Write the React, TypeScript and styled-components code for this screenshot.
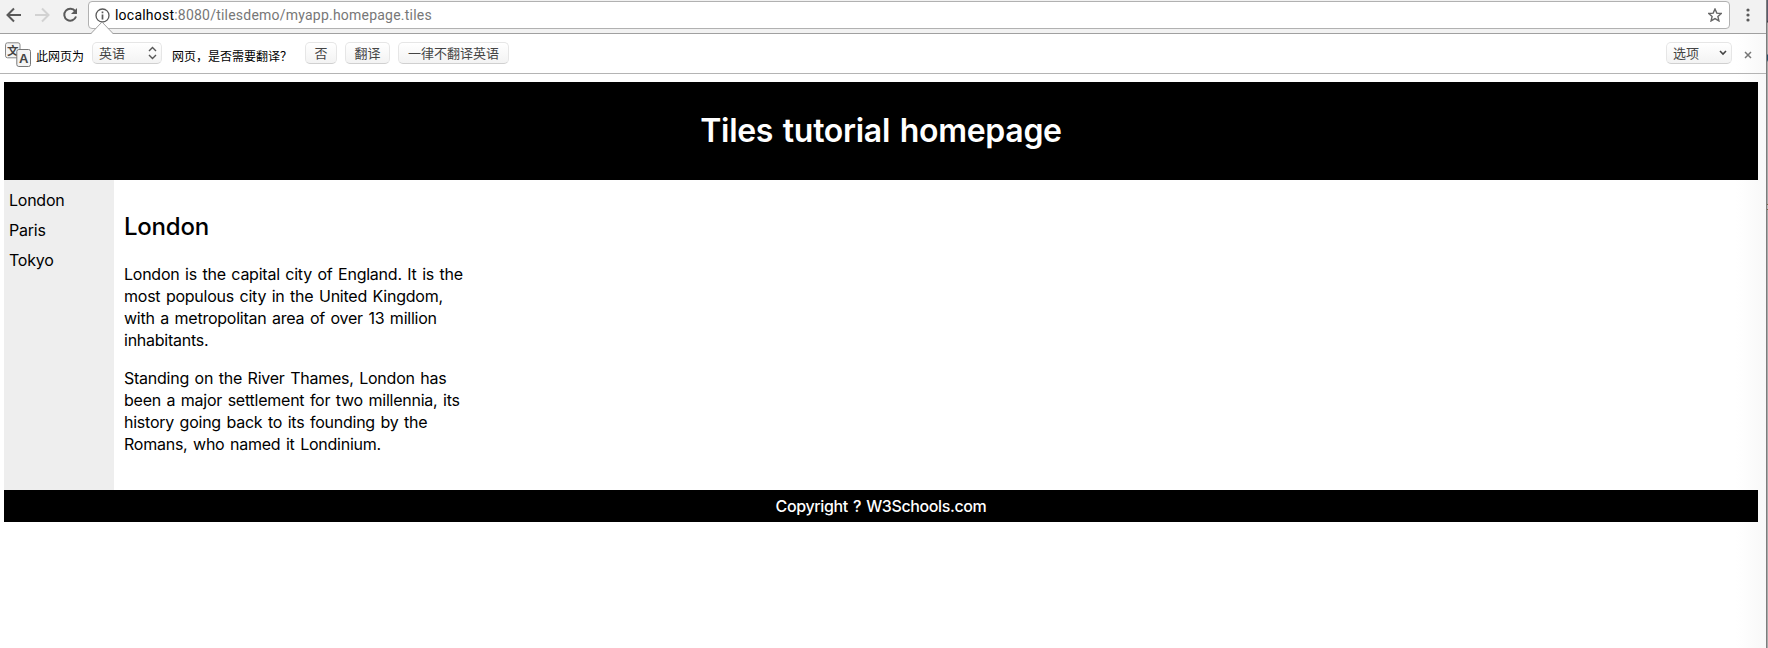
import React from 'react';
import styled, { createGlobalStyle } from 'styled-components';

const Global = createGlobalStyle`
  * { box-sizing: border-box; }
  body { margin: 0; background: #fff; overflow: hidden; font-family: 'Liberation Sans', 'Noto Sans CJK SC', sans-serif; }
`;
const Screen = styled.div`
  display: grid;
  grid-template-columns: 1766px 2px;
  grid-template-rows: 648px;
  width: 1768px;
`;
const Browser = styled.div`
  display: flex;
  flex-direction: column;
  min-width: 0;
  background: linear-gradient(to right, #fff calc(100% - 30px), #f8f8f8);
`;
const Edge = styled.div`
  border-left: 1px solid #7d7d7d;
  background: linear-gradient(#5a5a6c 0 20px, #353540 22px, #aaa 23px 54px, #27506a 55px 60px, #aaa 62px 204px, #7a6a4a 204px 205px, #bbb 205px 209px, #7a6a4a 209px 210px, #aaa 210px);
`;
const Toolbar = styled.div`
  display: flex;
  align-items: flex-start;
  height: 34px;
  padding: 1px 10px 0 6px;
  background: #f2f2f2;
  border-bottom: 1px solid #a0a0a0;
`;
const ToolIcon = styled.svg<{ $gap?: number }>`
  width: 16px;
  height: 16px;
  margin: 6px ${p => p.$gap ?? 12}px 0 0;
  flex: none;
  overflow: visible;
`;
const Omnibox = styled.div`
  display: flex;
  align-items: center;
  width: 1642px;
  height: 28px;
  padding: 0 7px 0 6px;
  background: #fff;
  border: 1px solid #b1b1b1;
  border-radius: 4px;
`;
const Url = styled.span`
  flex: 1;
  margin-left: 5px;
  font: 14px/26px Roboto, sans-serif;
  letter-spacing: 0.22px;
  color: #777;
  b { font-weight: 400; color: #000; }
`;
const Menu = styled.svg`
  width: 4px;
  height: 14px;
  margin: 7px 0 0 16px;
`;
const InfoBar = styled.div`
  position: relative;
  display: flex;
  align-items: flex-start;
  height: 40px;
  padding: 8px 14px 0 4px;
  border-bottom: 1px solid #b4b4b4;
`;
const Notch = styled.svg`
  position: absolute;
  left: 91px;
  top: -13px;
  width: 22px;
  height: 14px;
`;
const TranslateIcon = styled.svg`
  width: 28px;
  height: 28px;
  margin-right: 4px;
`;
const Label = styled.span<{ $w: number }>`
  width: ${p => p.$w}px;
  flex: none;
  font: 12px/18px 'Noto Sans CJK SC', sans-serif;
  color: #000;
  margin-top: 5px;
  white-space: nowrap;
`;
const Button = styled.span<{ $w: number; $gap?: number }>`
  display: flex;
  align-items: center;
  justify-content: space-between;
  flex: none;
  width: ${p => p.$w}px;
  height: 22px;
  padding: 0 4px 0 6px;
  margin-right: ${p => p.$gap ?? 8}px;
  border: 1px solid #e6e6e6;
  border-bottom-color: #d0d0d0;
  border-radius: 5px;
  background: linear-gradient(#fff, #f3f3f3);
  font: 13px/20px 'Noto Sans CJK SC', sans-serif;
  color: #444;
  white-space: nowrap;
`;
const PushButton = styled(Button)`
  justify-content: center;
  padding: 0;
`;
const Spacer = styled.div`flex: 1;`;
const Close = styled.svg`
  width: 8px;
  height: 8px;
  margin-top: 9px;
`;
const Page = styled.main`
  padding: 8px 8px 0 4px;
  color: #000;
  font-family: Inter, 'Liberation Sans', sans-serif;
  letter-spacing: -0.24px;
  word-spacing: 1.3px;
`;
const Header = styled.header`
  height: 98px;
  padding: 29px 0 0;
  background: #000;
  color: #fff;
  text-align: center;
  h1 { margin: 0; font-size: 32px; line-height: 40px; font-weight: 600; letter-spacing: -0.3px; word-spacing: 2px; }
`;
const Middle = styled.div`
  display: flex;
  height: 310px;
`;
const Nav = styled.nav`
  width: 110px;
  padding: 5px;
  background: #eee;
  font-size: 16px;
  line-height: 30px;
`;
const Section = styled.section`
  width: 370px;
  padding: 0 10px;
  font-size: 16px;
  line-height: 22px;
  h2 { margin: 30px 0 20px; font-size: 24px; line-height: 33px; font-weight: 500; }
  p { margin: 0 0 16px; white-space: nowrap; }
`;
const Footer = styled.footer`
  height: 32px;
  background: #000;
  color: #fff;
  text-align: center;
  font-size: 16px;
  font-weight: 500;
  letter-spacing: -0.38px;
  line-height: 33px;
`;

export default function App() {
  return (
    <Screen>
      <Global />
      <Browser>
        <Toolbar>
          <ToolIcon viewBox="0 0 16 16" fill="none" stroke="#5a5a5a" strokeWidth="2"><path d="M15 8H2M8 1.5 1.5 8 8 14.5" /></ToolIcon>
          <ToolIcon viewBox="0 0 16 16" fill="none" stroke="#d2d2d2" strokeWidth="2"><path d="M1 8h13M8 1.5 14.5 8 8 14.5" /></ToolIcon>
          <ToolIcon $gap={10} viewBox="0 0 16 16" fill="none" stroke="#5a5a5a" strokeWidth="2"><path d="M13.2 4.2A6 6 0 1 0 14 9.5" /><path d="M15 1v6H9z" fill="#5a5a5a" stroke="none" /></ToolIcon>
          <Omnibox>
            <svg width="15" height="15" viewBox="0 0 15 15"><circle cx="7.5" cy="7.5" r="6.5" fill="none" stroke="#5a5a5a" strokeWidth="1.3" /><path d="M7.5 6.5v5M7.5 3.5v1.7" stroke="#5a5a5a" strokeWidth="1.7" /></svg>
            <Url><b>localhost</b>:8080/tilesdemo/myapp.homepage.tiles</Url>
            <svg width="14" height="14" viewBox="0 0 14 14"><path d="m7 1 1.8 4.1 4.4.4-3.3 3 1 4.4L7 10.6 3.1 12.9l1-4.4-3.3-3 4.4-.4z" fill="none" stroke="#666" strokeWidth="1.4" /></svg>
          </Omnibox>
          <Menu viewBox="0 0 4 14" fill="#5a5a5a"><circle cx="2" cy="2" r="1.6" /><circle cx="2" cy="7" r="1.6" /><circle cx="2" cy="12" r="1.6" /></Menu>
        </Toolbar>
        <InfoBar>
          <Notch viewBox="0 0 22 14"><path d="M0 13 11 1l11 12v1H0z" fill="#fff" /><path d="M0 12.5 11 1l11 11.5" fill="none" stroke="#a0a0a0" /></Notch>
          <TranslateIcon viewBox="0 0 28 28">
            <rect x="1.5" y=".8" width="14.5" height="15" rx="2" fill="#f4f4f4" stroke="#888" />
            <text x="3" y="12.8" fontSize="11.5" fontWeight="700" fill="#444" fontFamily="Noto Sans CJK SC">文</text>
            <rect x="12.8" y="7.5" width="13.7" height="17" rx="2" fill="#f4f4f4" stroke="#777" />
            <text x="15" y="21" fontSize="13" fontWeight="700" fill="#444">A</text>
          </TranslateIcon>
          <Label $w={56}>此网页为</Label>
          <Button $w={70} $gap={10}>英语<svg width="9" height="14" viewBox="0 0 9 14"><path d="m1 5 3.5-3.5L8 5M1 9l3.5 3.5L8 9" fill="none" stroke="#555" strokeWidth="1.4" /></svg></Button>
          <Label $w={133}>网页，是否需要翻译？</Label>
          <PushButton $w={32}>否</PushButton>
          <PushButton $w={45}>翻译</PushButton>
          <PushButton $w={111}>一律不翻译英语</PushButton>
          <Spacer />
          <Button $w={66} $gap={12}>选项<svg width="8" height="6" viewBox="0 0 8 6"><path d="m1 1 3 3 3-3" fill="none" stroke="#444" strokeWidth="1.6" /></svg></Button>
          <Close viewBox="0 0 8 8"><path d="m1 1 6 6M7 1 1 7" stroke="#777" strokeWidth="1.5" /></Close>
        </InfoBar>
        <Page>
          <Header><h1>Tiles tutorial homepage</h1></Header>
          <Middle>
            <Nav>London<br />Paris<br />Tokyo<br /></Nav>
            <Section>
              <h2>London</h2>
              <p>London is the capital city of England. It is the<br />most populous city in the United Kingdom,<br />with a metropolitan area of over 13 million<br />inhabitants.</p>
              <p>Standing on the River Thames, London has<br />been a major settlement for two millennia, its<br />history going back to its founding by the<br />Romans, who named it Londinium.</p>
            </Section>
          </Middle>
          <Footer>Copyright ? W3Schools.com</Footer>
        </Page>
      </Browser>
      <Edge />
    </Screen>
  );
}
